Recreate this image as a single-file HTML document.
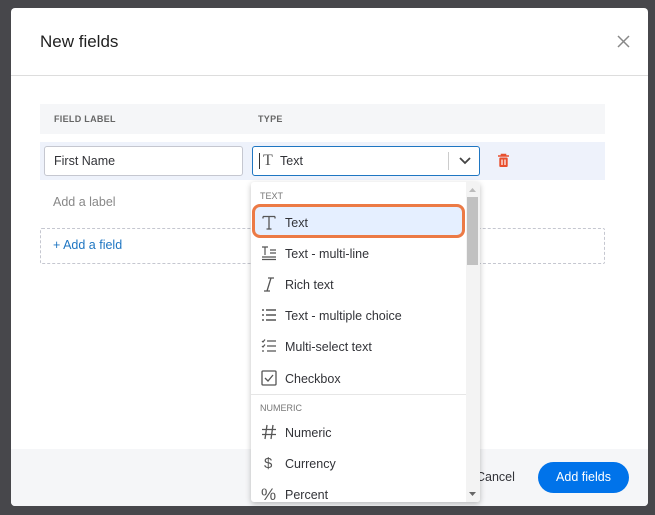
<!DOCTYPE html>
<html><head><style>
*{box-sizing:border-box;margin:0;padding:0}
body{width:655px;height:515px;background:#47474b;font-family:"Liberation Sans",sans-serif;position:relative;overflow:hidden;color:#323338}
.modal{position:absolute;left:11px;top:8px;width:637px;height:498px;background:#fff;border-radius:4px;overflow:hidden}
.a{position:absolute}
.footer{left:0;top:441px;width:637px;height:57px;background:#f5f6f8}
.item{position:absolute;left:0;width:229px;height:31px;font-size:12.5px;color:#323338;display:flex;align-items:center}
.item svg{position:absolute;left:10px;top:7px}
.item span{position:absolute;left:34px}
</style></head><body>
<div class="modal">
 <div class="a" style="left:29px;top:24px;font-size:17px;color:#1f1f1f">New fields</div>
 <svg class="a" style="left:606px;top:27px" width="13" height="13"><path d="M1 1L12 12M12 1L1 12" stroke="#888" stroke-width="1.5"/></svg>
 <div class="a" style="left:0;top:67px;width:637px;height:1px;background:#ddd"></div>
 <div class="a" style="left:29px;top:96px;width:565px;height:30px;background:#f5f6f8"></div>
 <div class="a" style="left:43px;top:106px;font-size:9px;font-weight:bold;color:#666;letter-spacing:.3px">FIELD LABEL</div>
 <div class="a" style="left:247px;top:106px;font-size:9px;font-weight:bold;color:#666;letter-spacing:.3px">TYPE</div>
 <div class="a" style="left:29px;top:134px;width:565px;height:38px;background:#eef2fb"></div>
 <div class="a" style="left:33px;top:138px;width:199px;height:30px;background:#fff;border:1px solid #c5c7d0;border-radius:3px;font-size:12.5px;padding:7px 9px">First Name</div>
 <div class="a" style="left:241px;top:138px;width:228px;height:30px;background:#fff;border:1.5px solid #1f76c2;border-radius:3px"></div>
 <div class="a" style="left:248px;top:145px;width:1px;height:16px;background:#333"></div>
 <div class="a" style="left:252px;top:144px;font-family:'Liberation Serif',serif;font-size:16px;color:#555">T</div>
 <div class="a" style="left:269px;top:146px;font-size:12.5px">Text</div>
 <div class="a" style="left:437px;top:144px;width:1px;height:18px;background:#ccc"></div>
 <svg class="a" style="left:448px;top:149px" width="12" height="8"><path d="M1 1L6 6L11 1" stroke="#444" stroke-width="1.8" fill="none"/></svg>
 <svg class="a" style="left:486px;top:145px" width="13" height="15"><path d="M1 3H12M4.5 3V1.5H8.5V3" stroke="#e8502f" stroke-width="1.6" fill="none"/><rect x="2.3" y="4.5" width="8.4" height="9.5" rx="1" fill="#e8502f"/><path d="M5 6.5V12M8 6.5V12" stroke="#fff" stroke-width="1.2"/></svg>
 <div class="a" style="left:42px;top:187px;font-size:12.5px;color:#888">Add a label</div>
 <div class="a" style="left:29px;top:220px;width:565px;height:36px;border:1px dashed #c5c7d0;border-radius:2px"></div>
 <div class="a" style="left:42px;top:230px;font-size:12.5px;color:#1f76c2">+ Add a field</div>
 <div class="a footer"></div>
 <div class="a" style="left:465px;top:462px;font-size:12.5px;color:#323338">Cancel</div>
 <div class="a" style="left:527px;top:454px;width:91px;height:31px;border-radius:16px;background:#0073ea;color:#fff;font-size:12.5px;text-align:center;line-height:31px">Add fields</div>
</div>
<div class="a" style="left:251px;top:182px;width:229px;height:320px;background:#fff;border-radius:3px;box-shadow:0 2px 6px rgba(0,0,0,.25);overflow:hidden">
 <div class="a" style="left:9px;top:9px;font-size:9px;color:#777">TEXT</div>
 <div class="a" style="left:1px;top:22px;width:213px;height:34px;background:#e5efff;border:3px solid #ec7a45;border-radius:8px"></div>
 <div class="item" style="top:25px"><svg width="16" height="16"><path d="M2 2.5H14M8 2.5V15M5.5 15H10.5M2 2.5V4.5M14 2.5V4.5" stroke="#555" stroke-width="1.3" fill="none"/></svg><span>Text</span></div>
 <div class="item" style="top:56px"><svg width="16" height="16"><path d="M1 2H7M4 2V10M9 5H15M9 8H15M1 12H15M1 14.5H15" stroke="#555" stroke-width="1.2" fill="none"/></svg><span>Text - multi-line</span></div>
 <div class="item" style="top:87px"><svg width="16" height="16"><path d="M7 2H13M3 15H9M10 2L6 15" stroke="#555" stroke-width="1.3" fill="none"/></svg><span>Rich text</span></div>
 <div class="item" style="top:118px"><svg width="16" height="16"><path d="M1 3H3M1 8H3M1 13H3M5 3H15M5 8H15M5 13H15" stroke="#555" stroke-width="1.6" fill="none"/></svg><span>Text - multiple choice</span></div>
 <div class="item" style="top:149px"><svg width="16" height="16"><path d="M1 3L2 4L4 1.5M1 8L2 9L4 6.5M1 13H3M6 3H15M6 8H15M6 13H15" stroke="#555" stroke-width="1.2" fill="none"/></svg><span>Multi-select text</span></div>
 <div class="item" style="top:181px"><svg width="16" height="16"><rect x="1" y="1" width="14" height="14" rx="1" stroke="#555" stroke-width="1.3" fill="none"/><path d="M4 8L7 11L12 5" stroke="#555" stroke-width="1.3" fill="none"/></svg><span>Checkbox</span></div>
 <div class="a" style="left:0;top:212px;width:215px;height:1px;background:#e6e6e6"></div>
 <div class="a" style="left:9px;top:221px;font-size:9px;color:#777">NUMERIC</div>
 <div class="item" style="top:235px"><svg width="16" height="16"><path d="M6 1L4 15M12 1L10 15M1 5.5H15M1 10.5H15" stroke="#555" stroke-width="1.3" fill="none"/></svg><span>Numeric</span></div>
 <div class="item" style="top:266px"><div class="a" style="left:13px;font-size:15px;color:#555">$</div><span>Currency</span></div>
 <div class="item" style="top:297px"><div class="a" style="left:10px;font-size:17px;color:#555">%</div><span>Percent</span></div>
 <div class="a" style="left:215px;top:0;width:14px;height:320px;background:#f3f3f3"></div>
 <div class="a" style="left:216px;top:15px;width:11px;height:68px;background:#c1c1c1"></div>
 <svg class="a" style="left:218px;top:6px" width="7" height="5"><path d="M0 4L3.5 0L7 4Z" fill="#bbb"/></svg>
 <svg class="a" style="left:218px;top:310px" width="7" height="5"><path d="M0 0L3.5 4L7 0Z" fill="#666"/></svg>
</div>
</body></html>
